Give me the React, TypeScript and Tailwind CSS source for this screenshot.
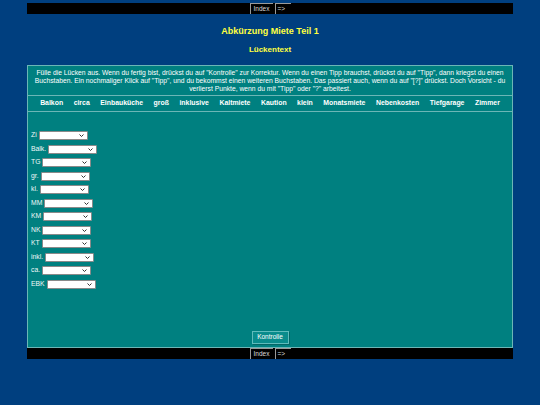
import React from "react";

const WORDS = [
  "Balkon", "circa", "Einbauküche", "groß", "inklusive", "Kaltmiete",
  "Kaution", "klein", "Monatsmiete", "Nebenkosten", "Tiefgarage", "Zimmer",
];

const GAPS = ["Zi", "Balk.", "TG", "gr.", "kl.", "MM", "KM", "NK", "KT", "inkl.", "ca.", "EBK"];

const INSTRUCTIONS = [
  'Fülle die Lücken aus. Wenn du fertig bist, drückst du auf "Kontrolle" zur Korrektur. Wenn du einen Tipp brauchst, drückst du auf "Tipp", dann kriegst du einen',
  'Buchstaben. Ein nochmaliger Klick auf "Tipp", und du bekommst einen weiteren Buchstaben. Das passiert auch, wenn du auf "[?]" drückst. Doch Vorsicht - du',
  'verlierst Punkte, wenn du mit "Tipp" oder "?" arbeitest.',
];

function NavBar() {
  return (
    <div className="mx-[27px] flex h-[11px] justify-center gap-[2px] bg-black">
      <button className="flex h-[11px] w-[23px] items-center justify-center border-l border-t border-[#9a9a9a] text-[6.5px] leading-none text-[#dcdcdc]">
        Index
      </button>
      <button className="flex h-[11px] w-[16px] items-center justify-start border-l border-t border-[#9a9a9a] pl-[2px] text-[6.5px] leading-none text-[#dcdcdc]">
        =&gt;
      </button>
    </div>
  );
}

function GapSelect() {
  return (
    <span className="relative inline-block align-middle">
      <select className="block h-[9px] w-[49px] appearance-none rounded-[1px] border border-[#8a8a8a] bg-white text-[6px] leading-none" />
      <svg
        className="pointer-events-none absolute right-[4px] top-[3px]"
        width="5"
        height="3"
        viewBox="0 0 5 3"
        fill="none"
        stroke="#333"
        strokeWidth="1"
      >
        <path d="M0.5 0.5L2.5 2.5L4.5 0.5" />
      </svg>
    </span>
  );
}

export default function App() {
  return (
    <div className="min-h-[405px] bg-[#003f7f] pt-[3px] font-['Liberation_Sans',Arial,sans-serif]">
      <NavBar />

      {/* Titel */}
      <h1 className="mt-[12px] text-center text-[9px] font-bold leading-[11px] text-[#ffff40]">
        Abkürzung Miete Teil 1
      </h1>
      <h2 className="mt-[8px] text-center text-[8px] font-bold leading-[10px] text-[#ffff40]">
        Lückentext
      </h2>

      {/* Übung */}
      <div className="mx-[27px] mt-[10px] flex h-[283px] flex-col border border-[#6cb6b6] bg-[#008080] text-white">
        <div className="flex flex-col items-center pb-[2px] pt-[3px] text-[6.75px] leading-[8px]">
          {INSTRUCTIONS.map((l) => (
            <p key={l} className="whitespace-nowrap">{l}</p>
          ))}
        </div>
        <div className="flex h-[17px] items-center justify-center gap-[10.5px] border-y border-[#6cb6b6] text-[6.9px] font-bold">
          {WORDS.map((w) => (
            <span key={w}>{w}</span>
          ))}
        </div>

        <div className="flex flex-1 flex-col px-[3px] pt-[19px]">
          <div className="flex flex-col gap-[4.5px]">
            {GAPS.map((g) => (
              <div key={g} className="flex h-[9px] items-center gap-[2px] text-[6.8px] leading-none text-[#f0f8f8]">
                <span>{g}</span>
                <GapSelect />
              </div>
            ))}
          </div>
          <div className="mt-auto flex justify-center pb-[3px]">
            <button className="h-[13px] w-[37px] border border-[#5fbcbc] bg-[#0a8c8c] text-[6.5px] leading-none text-white shadow-[1px_1px_0_#046666]">
              Kontrolle
            </button>
          </div>
        </div>
      </div>

      <NavBar />
    </div>
  );
}
